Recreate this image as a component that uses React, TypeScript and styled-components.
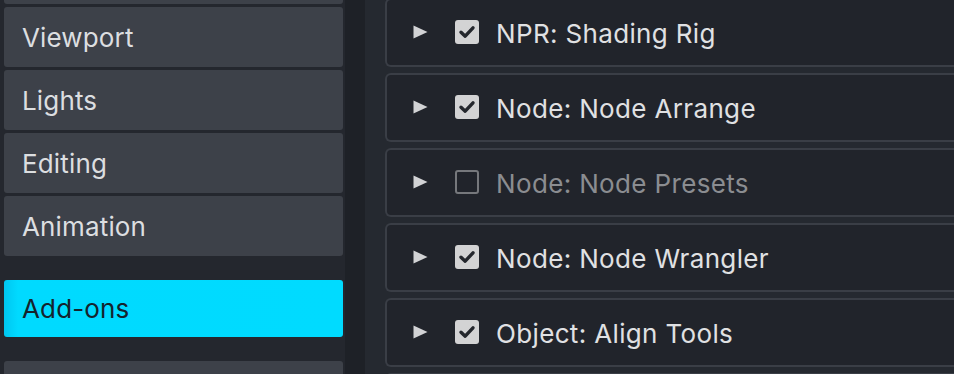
import React from "react";
import styled, { createGlobalStyle } from "styled-components";

const Global = createGlobalStyle`
  html, body { margin: 0; padding: 0; background: #21242b; }
  body { font-family: Inter, "DejaVu Sans", sans-serif; }
`;

const Page = styled.div`
  display: flex;
  width: 954px;
  height: 374px;
  overflow: hidden;
  background: #21242b;
`;

const Sidebar = styled.nav`
  width: 345px;
  flex: none;
  box-sizing: border-box;
  padding: 0 2px 0 4px;
  background: #24272e;
  overflow: hidden;
`;

const SideList = styled.div`
  display: flex;
  flex-direction: column;
  gap: 24px;
  margin-top: -56px;
`;

const Group = styled.div`
  display: flex;
  flex-direction: column;
  gap: 3px;
`;

const SideItem = styled.div<{ $active?: boolean; $h?: number }>`
  height: ${(p) => p.$h ?? 60}px;
  display: flex;
  align-items: center;
  padding-left: 18px;
  border-radius: 3px;
  font-size: 26px;
  letter-spacing: 0.15px;
  color: ${(p) => (p.$active ? "#15232d" : "#dcdee0")};
  background: ${(p) =>
    p.$active ? "linear-gradient(90deg, #00c6f0 0px, #00daff 14px, #00dbff 100%)" : "#3d4149"};
`;

const Divider = styled.div`
  width: 20px;
  flex: none;
  background: #1e2127;
`;

const Main = styled.main`
  flex: 1;
  background: #252930;
  padding-left: 20px;
  overflow: hidden;
`;

const CardList = styled.div`
  display: flex;
  flex-direction: column;
  gap: 6px;
  margin-top: -2px;
  width: 700px;
`;

const Card = styled.div<{ $off?: boolean }>`
  height: 69px;
  box-sizing: border-box;
  display: flex;
  align-items: center;
  padding-left: 26px;
  border: 2px solid #3a3e46;
  border-right: none;
  border-radius: 6px 0 0 6px;
  background: #21242b;
  font-size: 26px;
  letter-spacing: 0.35px;
  color: ${(p) => (p.$off ? "#8b8d91" : "#e0e1e3")};
`;

const Arrow = styled.svg`
  width: 15px;
  height: 14px;
  flex: none;
  margin-right: 27px;
  margin-top: -2px;
`;

const Check = styled.div<{ $on: boolean }>`
  width: 24px;
  height: 24px;
  box-sizing: border-box;
  flex: none;
  border-radius: 3px;
  margin-right: 17px;
  display: flex;
  align-items: center;
  justify-content: center;
  background: ${(p) => (p.$on ? "#d3d3d4" : "transparent")};
  border: ${(p) => (p.$on ? "none" : "2px solid #76787c")};
  margin-top: -2px;
`;

const Label = styled.span`
  white-space: nowrap;
  margin-top: 2px;
`;

const addons = [
  { name: "NPR: Shading Rig", on: true },
  { name: "Node: Node Arrange", on: true },
  { name: "Node: Node Presets", on: false },
  { name: "Node: Node Wrangler", on: true },
  { name: "Object: Align Tools", on: true },
  { name: "Object: Bool Tool", on: true },
];

export default function App() {
  return (
    <>
      <Global />
      <Page>
        <Sidebar>
          <SideList>
            <Group>
              <SideItem>Interface</SideItem>
              <SideItem>Viewport</SideItem>
              <SideItem>Lights</SideItem>
              <SideItem>Editing</SideItem>
              <SideItem>Animation</SideItem>
            </Group>
            <Group>
              <SideItem $active $h={57}>Add-ons</SideItem>
            </Group>
            <Group>
              <SideItem>Input</SideItem>
            </Group>
          </SideList>
        </Sidebar>
        <Divider />
        <Main>
          <CardList>
            {addons.map((a) => (
              <Card key={a.name} $off={!a.on}>
                <Arrow viewBox="0 0 15 14">
                  <polygon points="0.5,0.5 14.5,7 0.5,13.5" fill="#d2d3d5" />
                </Arrow>
                <Check $on={a.on}>
                  {a.on && (
                    <svg width="18" height="18" viewBox="0 0 18 18">
                      <path
                        d="M3 9.2 L7.2 13.2 L15 4.8"
                        fill="none"
                        stroke="#24272d"
                        strokeWidth="3.4"
                        strokeLinecap="round"
                        strokeLinejoin="round"
                      />
                    </svg>
                  )}
                </Check>
                <Label>{a.name}</Label>
              </Card>
            ))}
          </CardList>
        </Main>
      </Page>
    </>
  );
}
